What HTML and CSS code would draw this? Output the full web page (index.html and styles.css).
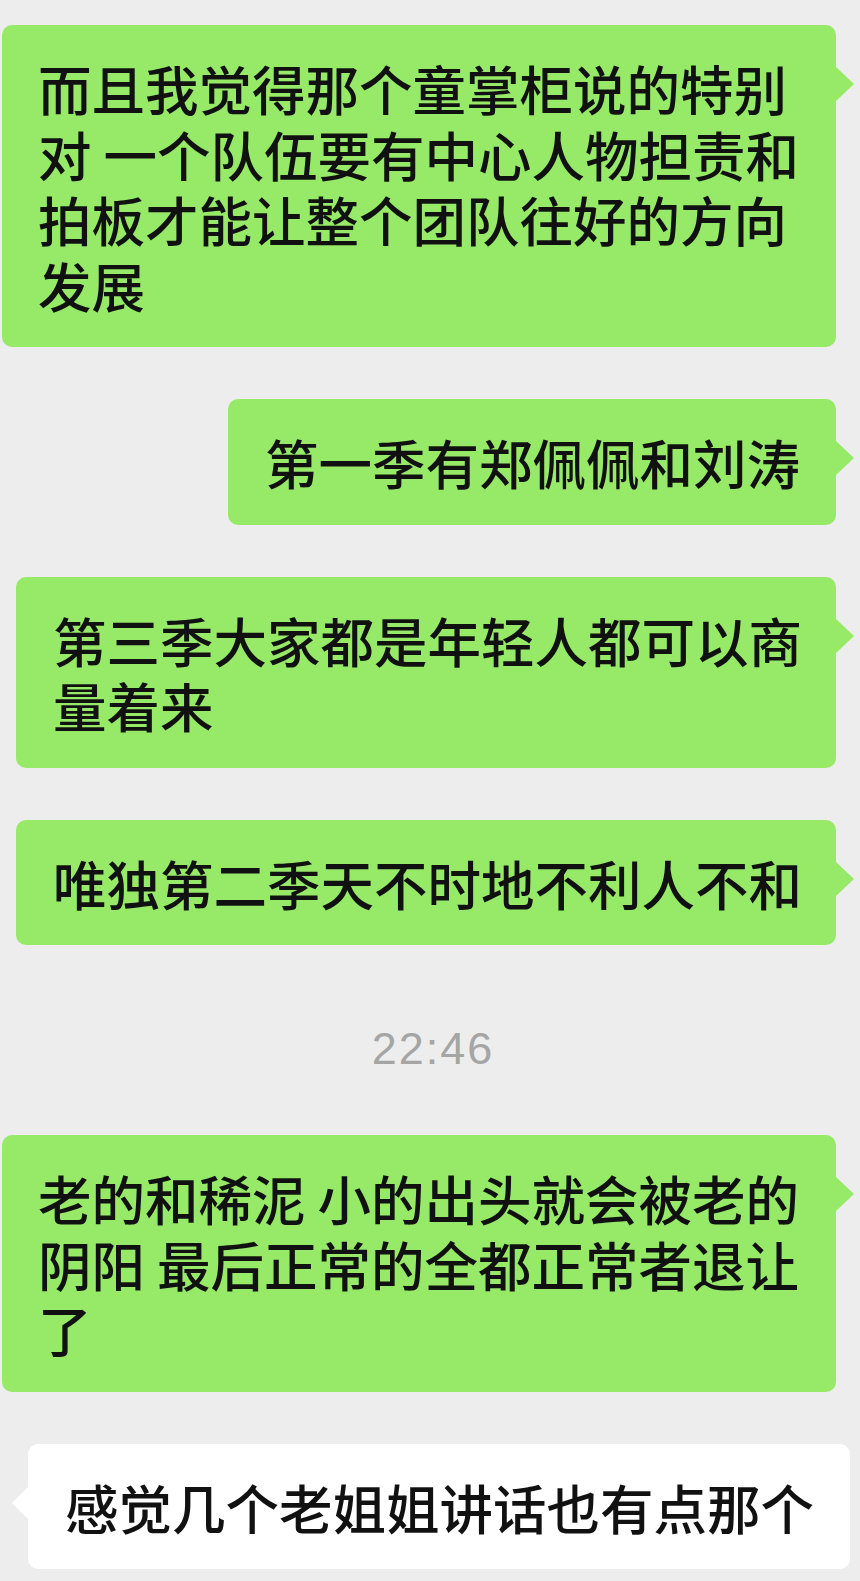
FILE: index.html
```html
<!DOCTYPE html>
<html lang="zh-CN">
<head>
    <meta charset="UTF-8">
    <meta name="viewport" content="width=device-width, initial-scale=1.0">
    <title>聊天记录</title>
    <link rel="stylesheet" href="styles.css">
</head>
<body>
    <div class="chat">
        <div class="bubble bubble-out bubble-wide">而且我觉得那个童掌柜说的特别对 一个队伍要有中心人物担责和拍板才能让整个团队往好的方向发展</div>

        <div class="bubble bubble-out bubble-fit">第一季有郑佩佩和刘涛</div>

        <div class="bubble bubble-out bubble-wide bubble-inset">第三季大家都是年轻人都可以商量着来</div>

        <div class="bubble bubble-out bubble-wide bubble-inset">唯独第二季天不时地不利人不和</div>

        <div class="time">22:46</div>

        <div class="bubble bubble-out bubble-wide">老的和稀泥 小的出头就会被老的阴阳 最后正常的全都正常者退让了</div>

        <div class="bubble bubble-in">感觉几个老姐姐讲话也有点那个</div>
    </div>
</body>
</html>
```

FILE: styles.css
```css
body {
    margin: 0;
    background-color: #ededed;
    font-family: "Noto Sans CJK SC", "Noto Sans", sans-serif;
    color: #111;
}
.chat {
    display: flex;
    flex-direction: column;
    gap: 52px;
    padding: 25px 24px 13px 2px;
}
.bubble {
    position: relative;
    font-size: 53.5px;
    font-weight: 500;
    line-height: 65.5px;
    padding: 30px 36px 30px 37px;
    border-radius: 10px;
}
.bubble-out {
    background-color: #97ea68;
}
.bubble-out::after {
    content: "";
    position: absolute;
    right: -18px;
    top: 42px;
    border-left: 18px solid #97ea68;
    border-top: 17px solid transparent;
    border-bottom: 17px solid transparent;
}
.bubble-wide {
    padding-left: 36px;
    padding-right: 26px;
}
.bubble-inset {
    margin-left: 14px;
    padding-left: 37px;
    padding-right: 11px;
}
.bubble-fit {
    align-self: flex-end;
}
.bubble-in {
    align-self: flex-start;
    margin-left: 26px;
    margin-right: -13px;
    white-space: nowrap;
    background-color: #ffffff;
}
.bubble-in::before {
    content: "";
    position: absolute;
    left: -16px;
    top: 43px;
    border-right: 16px solid #ffffff;
    border-top: 16px solid transparent;
    border-bottom: 16px solid transparent;
}
.time {
    text-align: center;
    font-family: "Liberation Sans", Arial, sans-serif;
    font-size: 45px;
    line-height: 50px;
    letter-spacing: 2px;
    color: #a5a5a5;
    padding: 27px 0 9px 28px;
}
```
